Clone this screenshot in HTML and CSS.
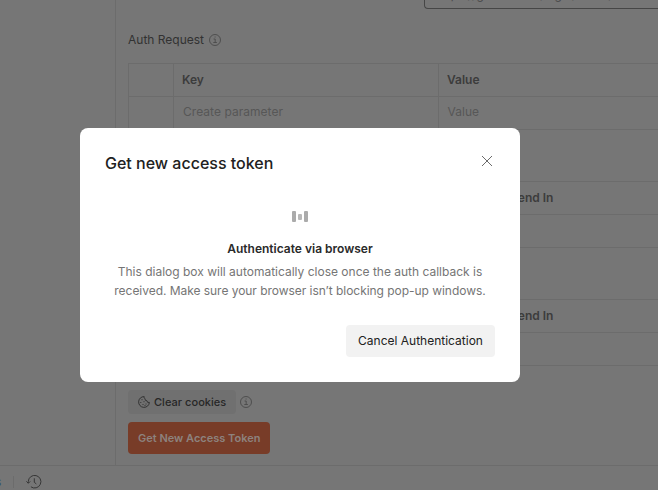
FILE: index.html
```html
<!DOCTYPE html>
<html lang="en">
<head>
<meta charset="utf-8">
<title>Get new access token</title>
<link rel="stylesheet" href="styles.css">
</head>
<body>
<div class="app">
  <div class="workspace">
    <aside class="sidebar"></aside>
    <main class="content">
      <div class="url-input"><span>https://github.com/login/oauth/</span></div>
      <div class="section-title"><span>Auth Request</span>
        <svg class="info" viewBox="0 0 12 12"><circle cx="6" cy="6" r="5.5"/><path d="M4.6 5h1.6v3.5M4.3 8.5h3.6M5.6 3h1"/></svg>
      </div>
      <div class="table">
        <div class="row head"><div class="cell"></div><div class="cell">Key</div><div class="cell">Value</div></div>
        <div class="row hint"><div class="cell"></div><div class="cell">Create parameter</div><div class="cell">Value</div></div>
      </div>
      <div class="table send">
        <div class="row head"><div class="cell"></div><div class="cell"></div><div class="cell"></div><div class="cell">Send In</div></div>
        <div class="row"><div class="cell"></div><div class="cell"></div><div class="cell"></div><div class="cell"></div></div>
      </div>
      <div class="table send">
        <div class="row head"><div class="cell"></div><div class="cell"></div><div class="cell"></div><div class="cell">Send In</div></div>
        <div class="row"><div class="cell"></div><div class="cell"></div><div class="cell"></div><div class="cell"></div></div>
      </div>
      <div class="cookies">
        <button class="clear"><svg class="cookie" viewBox="0 0 12 12"><path d="M6.2.6A5.4 5.4 0 1 0 11.4 6.4 1.8 1.8 0 0 1 9 4.8 1.9 1.9 0 0 1 7 2.8 1.8 1.8 0 0 1 6.2.6z"/><path d="M4 3.2v1M6 5.2v1M2.8 6v1M5 8v1M8 7.5v1M6.5 9.6h1"/></svg><span>Clear cookies</span></button>
        <svg class="info" viewBox="0 0 12 12"><circle cx="6" cy="6" r="5.5"/><path d="M4.6 5h1.6v3.5M4.3 8.5h3.6M5.6 3h1"/></svg>
      </div>
      <button class="get-token"><span>Get New Access Token</span></button>
    </main>
  </div>
  <footer class="status">
    <span class="link">s</span>
    <span class="divider"></span>
    <svg class="history" viewBox="0 0 16 14"><path d="M2.3 8V6.5a6.3 6.3 0 1 1 2.6 5.3M.4 6.4l1.9 1.9 1.9-1.9M8.3 3.3v4l2 1.6"/></svg>
  </footer>
</div>
<section class="modal" role="dialog">
  <header><h1>Get new access token</h1>
    <svg class="close" viewBox="0 0 12 12"><path d="M1 1l10 10M11 1L1 11"/></svg>
  </header>
  <div class="loader"><i></i><i></i><i></i></div>
  <h2>Authenticate via browser</h2>
  <p><span class="l1">This dialog box will automatically close once the auth callback is</span><br><span class="l2">received. Make sure your browser isn’t blocking pop-up windows.</span></p>
  <button class="cancel"><span>Cancel Authentication</span></button>
</section>
</body>
</html>
```

FILE: styles.css
```css
* { box-sizing: border-box; }
body { margin: 0; font: 12px/16px Inter, "Liberation Sans", sans-serif; color: #323232; background: #767676; }
button { border: 0; padding: 0; font: inherit; color: inherit; display: flex; align-items: center; }
svg { fill: none; stroke: #4b4b4b; flex: none; display: block; }
.app { width: 658px; height: 490px; overflow: hidden; display: flex; flex-direction: column; }
.workspace { display: flex; height: 465px; }
.sidebar { width: 116px; border-right: 1px solid #6c6c6c; flex: none; }
.content { flex: 1; min-width: 0; padding-left: 12px; }
.url-input { margin-left: 296px; height: 9px; border: 1px solid #464646; border-width: 0 0 1px 1px; border-bottom-left-radius: 4px; padding-left: 11px; overflow: hidden; color: #4b4b4b; }
.url-input span { display: block; margin-top: -13px; }
.section-title { display: flex; align-items: center; gap: 4px; height: 16px; margin: 23px 0 15px; font-size: 12px; }
.section-title span { width: 77px; white-space: nowrap; }
.section-title .info { margin-bottom: 1px; }
.info { width: 12px; height: 12px; stroke-width: .9; }
.table { border-top: 1px solid #6c6c6c; border-left: 1px solid #6c6c6c; margin-bottom: 51px; }
.row { display: grid; grid-template-columns: 45px 265px 1fr; height: 33px; border-bottom: 1px solid #6c6c6c; }
.send .row { grid-template-columns: 45px 165px 163px 1fr; }
.cell { border-right: 1px solid #6c6c6c; padding: 8px; }
.cell:last-child { border-right: 0; }
.head { font-weight: 600; color: #3c3c3c; }
.hint { color: #575757; }
.hint .cell { padding: 7px 8px 7px 9px; letter-spacing: .04px; }
.hint .cell:last-child { padding-left: 8.5px; }
.cookies { display: flex; align-items: center; gap: 4px; margin-top: -27px; }
.clear { height: 24px; width: 108px; padding-left: 10px; gap: 4px; background: #707070; border-radius: 4px; font-weight: 500; font-size: 11px; letter-spacing: .04px; color: #272727; }
.cookie { width: 12px; height: 12px; stroke: #2c2c2c; stroke-width: .9; }
.get-token { width: 142px; height: 32px; margin-top: 8px; padding-left: 10px; background: #783c28; border-radius: 4px; color: #8d827e; font-weight: 600; font-size: 11px; }
.status { height: 25px; border-top: 1px solid #6c6c6c; display: flex; align-items: center; padding-top: 7px; }
.link { width: 13px; color: #32506f; margin-left: -5px; }
.divider { width: 1px; height: 12px; background: #6c6c6c; margin-left: 5px; }
.history { width: 16px; height: 14px; margin-left: 12px; stroke: #373737; }
.modal { position: absolute; left: 80px; top: 128px; width: 440px; height: 254px; padding: 25px; background: #fff; border-radius: 8px; }
.modal header { display: flex; justify-content: space-between; height: 20px; }
h1 { margin: 0; font-size: 16px; line-height: 20px; font-weight: 500; color: #212121; }
.close { width: 12px; height: 12px; margin: 2px 2px 0 0; stroke: #6b6b6b; }
.loader { display: flex; justify-content: center; align-items: center; gap: 2px; height: 11px; margin-top: 38px; margin-bottom: 18px; }
.loader i { width: 4px; height: 11px; border-radius: 1px; background: #ababab; }
.loader i:nth-child(2) { height: 6px; background: #b8b8b8; }
h2 { margin: 0 0 5px; height: 17px; font-size: 12px; line-height: 17px; font-weight: 600; text-align: center; color: #2a2a2a; }
.modal p { margin: 0; line-height: 19px; text-align: center; color: #757575; white-space: nowrap; }
.l2 { letter-spacing: -.04px; }
.cancel { width: 149px; height: 32px; margin: 25px 0 0 auto; justify-content: center; background: #f2f2f2; border-radius: 4px; color: #212121; }
```
